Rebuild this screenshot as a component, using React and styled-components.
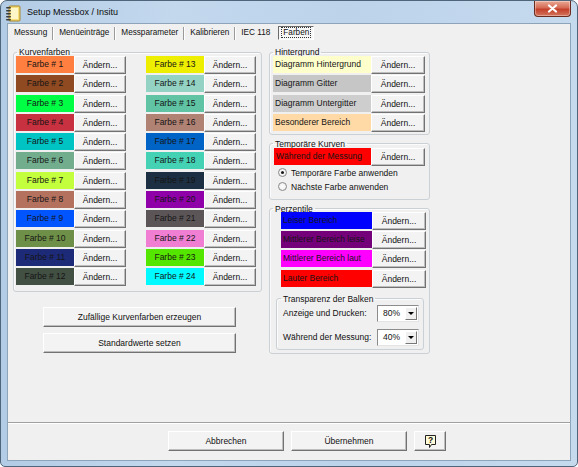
import React from 'react'
import styled, { createGlobalStyle } from 'styled-components'

const GlobalStyle = createGlobalStyle`
  html, body {
    margin: 0;
    padding: 0;
    background: #ffffff;
  }
  body {
    font-family: 'Liberation Sans', Arial, sans-serif;
  }
`

const curveColors = [
  '#ff7f40', '#8f4a22', '#00ff44', '#c8313f', '#00c3c3', '#72ae8e',
  '#c3ff3c', '#b4715e', '#0055ff', '#6e8f47', '#1d2a78', '#424f43',
  '#eeee00', '#94d3c3', '#5fc3a4', '#b08274', '#0063c6', '#45d1b4',
  '#1d2f42', '#8f00a8', '#5c5558', '#f07fd4', '#55e600', '#00faff',
]

const background = [
  { label: 'Diagramm Hintergrund', color: '#ffffcc' },
  { label: 'Diagramm Gitter', color: '#c6c6c6' },
  { label: 'Diagramm Untergitter', color: '#cecece' },
  { label: 'Besonderer Bereich', color: '#ffdaa6' },
]

const percentiles = [
  { label: 'Leiser Bereich', color: '#0000ff' },
  { label: 'Mittlerer Bereich leise', color: '#74007a' },
  { label: 'Mittlerer Bereich laut', color: '#ff00ff' },
  { label: 'Lauter Bereich', color: '#ff0000' },
]

const tabs = ['Messung', 'Menüeinträge', 'Messparameter', 'Kalibrieren', 'IEC 118', 'Farben']

const Window = styled.div`
  width: 578px;
  height: 467px;
  box-sizing: border-box;
  display: flex;
  flex-direction: column;
  border: 1px solid #4f6579;
  border-radius: 7px 7px 5px 5px;
  background: linear-gradient(90deg, #b3cce5 0%, #c3d8ed 30%, #bcd3ea 60%, #c6daee 100%);
  padding: 0 6px 5px 6px;
  overflow: hidden;
  font-family: 'Liberation Sans', Arial, sans-serif;
  font-size: 8.5px;
  color: #111;
`

const TitleBar = styled.div`
  height: 22px;
  display: flex;
  align-items: flex-start;
  flex-shrink: 0;
`

const TitleIcon = styled.svg`
  margin: 4px 0 0 -2px;
  flex-shrink: 0;
`

const TitleText = styled.span`
  margin: 6px 0 0 6px;
  font-size: 9px;
  color: #0c0c0c;
  flex: 1;
`

const CloseBox = styled.div`
  width: 37px;
  height: 16px;
  box-sizing: border-box;
  border: 1px solid #6a2a1e;
  border-top: none;
  border-radius: 0 0 4px 4px;
  background: linear-gradient(180deg, #e9a995 0%, #d66b55 45%, #c4402a 55%, #d3745c 100%);
  display: flex;
  align-items: center;
  justify-content: center;
  box-shadow: inset 0 0 0 1px rgba(255, 255, 255, 0.35);
`

const Client = styled.div`
  flex: 1;
  display: flex;
  flex-direction: column;
  background: #f0f0f0;
  border: 1px solid #8ea4b9;
  min-height: 0;
`

const TabStrip = styled.div`
  display: flex;
  align-items: center;
  height: 14px;
  margin-top: 2px;
  padding-left: 1px;
  font-size: 8.2px;
`

const TabSep = styled.span`
  width: 1px;
  height: 13px;
  background: #9a9a9a;
  border-right: 1px solid #fff;
`

const Tab = styled.span`
  box-sizing: border-box;
  height: 14px;
  line-height: 12px;
  padding: 0 ${p => (p.$active ? 3 : 4)}px;
  border: 1px solid transparent;
  ${p => p.$active && `
    border-color: #6b6b6b #ffffff #ffffff #6b6b6b;
    background: #f7f7f7;
    margin-left: 3px;
  `}
`

const Focus = styled.span`
  outline: 1px dotted #333;
  outline-offset: 0;
  padding: 0 1px;
`

const Page = styled.div`
  flex: 1;
  display: flex;
  gap: 7px;
  padding: 7px 0 0 5px;
`

const Column = styled.div`
  width: ${p => p.$w}px;
  display: flex;
  flex-direction: column;
`

const Group = styled.fieldset`
  margin: ${p => p.$m || '0'};
  min-width: 0;
  border: 1px solid #cbd0d4;
  border-radius: 3px;
  box-shadow: inset 1px 1px 0 #fbfbfb;
  padding: 0 ${p => p.$pr ?? 4}px ${p => p.$pb ?? 3}px ${p => p.$pl ?? 3}px;
`

const Legend = styled.legend`
  padding: 0 2px;
  margin-left: ${p => p.$ml ?? 3}px;
  line-height: 10px;
  font-size: 8.5px;
  color: #111;
`

const Rows = styled.div`
  display: grid;
  grid-auto-rows: 18px;
  row-gap: 1.3px;
  margin-top: ${p => p.$mt ?? -1}px;
`

const CurveGrid = styled.div`
  display: grid;
  grid-template-rows: repeat(12, 18px);
  grid-auto-flow: column;
  grid-auto-columns: 110px;
  column-gap: 20px;
  row-gap: 1.3px;
  margin-top: -1px;
`

const Row = styled.div`
  display: flex;
  height: 18px;
`

const Swatch = styled.div`
  box-sizing: border-box;
  width: ${p => p.$w}px;
  height: 17px;
  line-height: 17px;
  background: ${p => p.$bg};
  text-align: ${p => (p.$left ? 'left' : 'center')};
  padding-left: ${p => (p.$left ? 2 : 0)}px;
  white-space: nowrap;
  overflow: hidden;
  color: #151515;
`

const Button = styled.button`
  box-sizing: border-box;
  width: ${p => p.$w}px;
  height: ${p => p.$h || 18}px;
  padding: 0;
  font-family: inherit;
  font-size: 8.5px;
  color: #111;
  background: #f3f3f3;
  border: 1px solid;
  border-color: #ffffff #727272 #727272 #ffffff;
  box-shadow: inset -1px -1px 0 #bdbdbd;
  white-space: nowrap;
  display: flex;
  align-items: center;
  justify-content: center;
`

const WideButtons = styled.div`
  display: flex;
  flex-direction: column;
  gap: 6px;
  margin: 15px 0 0 30px;
`

const Radios = styled.div`
  padding-left: 4px;
`

const RadioLine = styled.div`
  display: flex;
  align-items: center;
  height: 14px;
  gap: 4px;
`

const RadioDot = styled.span`
  box-sizing: border-box;
  width: 9px;
  height: 9px;
  border-radius: 50%;
  border: 1px solid #8a8a8a;
  background: radial-gradient(circle, #ffffff 0%, #e8e8e8 100%);
  display: flex;
  align-items: center;
  justify-content: center;
  &::after {
    content: '';
    width: 3px;
    height: 3px;
    border-radius: 50%;
    background: ${p => (p.$on ? '#1a1a1a' : 'transparent')};
  }
`

const ComboRow = styled.div`
  display: flex;
  align-items: center;
  justify-content: space-between;
  height: 17px;
  padding: 0 4px 0 6px;
`

const ComboRows = styled.div`
  display: flex;
  flex-direction: column;
  gap: 7px;
  margin-top: 1px;
`

const Combo = styled.div`
  box-sizing: border-box;
  width: 42px;
  height: 17px;
  display: flex;
  align-items: center;
  background: #fff;
  border: 1px solid;
  border-color: #8c8c8c #e4e4e4 #e4e4e4 #8c8c8c;
  padding: 1px;
`

const ComboText = styled.span`
  flex: 1;
  padding-left: 4px;
`

const ComboArrow = styled.span`
  box-sizing: border-box;
  width: 12px;
  height: 13px;
  background: #f0f0f0;
  border: 1px solid;
  border-color: #fff #777 #777 #fff;
  display: flex;
  align-items: center;
  justify-content: center;
  &::after {
    content: '';
    border-left: 3px solid transparent;
    border-right: 3px solid transparent;
    border-top: 3px solid #000;
  }
`

const Footer = styled.div`
  display: flex;
  gap: 7px;
  padding: 8px 0 9px 160px;
  border-top: 1px solid #a0a0a0;
  box-shadow: inset 0 1px 0 #ffffff;
`

const NoteIcon = () => (
  <TitleIcon width="16" height="17" viewBox="0 0 16 17">
    <rect x="4" y="1" width="11" height="15" rx="1" fill="#f4df7a" stroke="#a8852a" />
    <rect x="6" y="3" width="7" height="11" fill="#fff6c8" />
    {[2, 5, 8, 11, 14].map(y => (
      <rect key={y} x="1" y={y} width="5" height="1.6" rx="0.8" fill="#3b3b3b" />
    ))}
  </TitleIcon>
)

const HelpIcon = () => (
  <svg width="13" height="15" viewBox="0 0 13 15">
    <path d="M1.5 1.5h10v9h-4l-2 3v-3h-4z" fill="#fffbd8" stroke="#222" />
    <text x="6.5" y="9.3" fontSize="8.5" fontWeight="bold" textAnchor="middle" fontFamily="Liberation Sans, Arial, sans-serif" fill="#111">?</text>
  </svg>
)

const ColorRow = ({ label, color, w, left }) => (
  <Row>
    <Swatch $bg={color} $w={w} $left={left}>{label}</Swatch>
    <Button $w={left ? 54 : 52}>Ändern...</Button>
  </Row>
)

export default function App() {
  return (
    <>
      <GlobalStyle />
      <Window>
        <TitleBar>
          <NoteIcon />
          <TitleText>Setup Messbox / Insitu</TitleText>
          <CloseBox>
            <svg width="11" height="9" viewBox="0 0 11 9">
              <path d="M2 1.5l7 6M9 1.5l-7 6" stroke="#fff" strokeWidth="2.2" strokeLinecap="round" />
            </svg>
          </CloseBox>
        </TitleBar>

        <Client>
          <TabStrip>
            {tabs.map((t, i) => {
              const active = t === 'Farben'
              const prevActive = tabs[i - 1] === 'Farben'
              return (
                <React.Fragment key={t}>
                  {i > 0 && !active && !prevActive && <TabSep />}
                  <Tab $active={active}>{active ? <Focus>{t}</Focus> : t}</Tab>
                </React.Fragment>
              )
            })}
          </TabStrip>

          <Page>
            <Column $w={249}>
              <Group $pl={2} $pr={2} $pb={5}>
                <Legend $ml={1}>Kurvenfarben</Legend>
                <CurveGrid>
                  {curveColors.map((c, i) => (
                    <ColorRow key={c + i} label={`Farbe # ${i + 1}`} color={c} w={58} />
                  ))}
                </CurveGrid>
              </Group>
              <WideButtons>
                <Button $w={193} $h={20}>Zufällige Kurvenfarben erzeugen</Button>
                <Button $w={193} $h={20}>Standardwerte setzen</Button>
              </WideButtons>
            </Column>

            <Column $w={161}>
              <Group $pl={3} $pr={5} $pb={2}>
                <Legend $ml={0}>Hintergrund</Legend>
                <Rows>
                  {background.map(b => (
                    <ColorRow key={b.label} label={b.label} color={b.color} w={98} left />
                  ))}
                </Rows>
              </Group>

              <Group $m="4px 0 0 0" $pl={4} $pr={5} $pb={5}>
                <Legend $ml={-1}>Temporäre Kurven</Legend>
                <Rows>
                  <ColorRow label="Während der Messung" color="#ff0000" w={97} left />
                </Rows>
                <Radios>
                  <RadioLine><RadioDot $on />Temporäre Farbe anwenden</RadioLine>
                  <RadioLine><RadioDot />Nächste Farbe anwenden</RadioLine>
                </Radios>
              </Group>

              <Group $m="4px 0 0 0" $pl={11} $pr={5} $pb={3}>
                <Legend $ml={-8}>Perzentile</Legend>
                <Rows $mt={-2}>
                  {percentiles.map(p => (
                    <ColorRow key={p.label} label={p.label} color={p.color} w={91} left />
                  ))}
                </Rows>
                <Group $m="6px 0 0 -5px" $pl={0} $pr={0} $pb={3}>
                  <Legend $ml={4}>Transparenz der Balken</Legend>
                  <ComboRows>
                    <ComboRow>
                      Anzeige und Drucken:
                      <Combo><ComboText>80%</ComboText><ComboArrow /></Combo>
                    </ComboRow>
                    <ComboRow>
                      Während der Messung:
                      <Combo><ComboText>40%</ComboText><ComboArrow /></Combo>
                    </ComboRow>
                  </ComboRows>
                </Group>
              </Group>
            </Column>
          </Page>

          <Footer>
            <Button $w={116} $h={20}>Abbrechen</Button>
            <Button $w={116} $h={20}>Übernehmen</Button>
            <Button $w={32} $h={20}><HelpIcon /></Button>
          </Footer>
        </Client>
      </Window>
    </>
  )
}
